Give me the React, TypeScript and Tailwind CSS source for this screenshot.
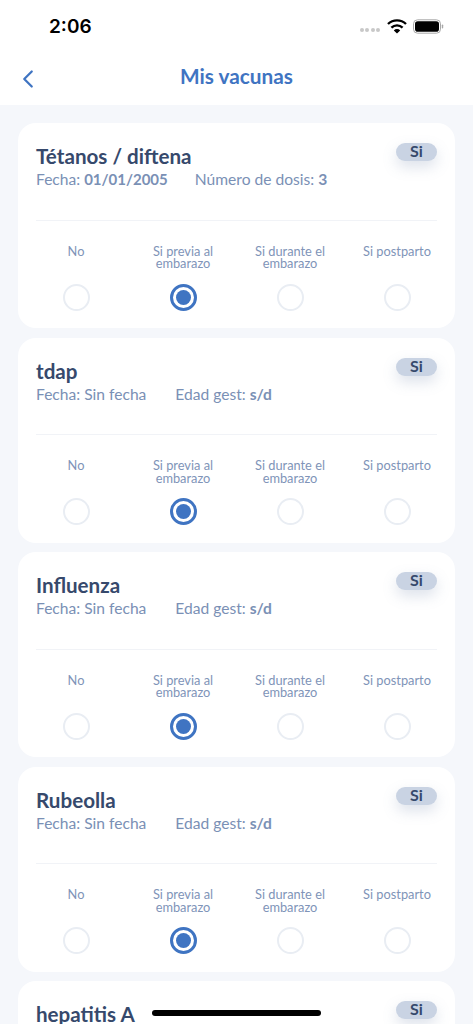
import { ChevronLeft } from "lucide-react";

const vaccines = [
  { name: "Tétanos / diftena", dateValue: "01/01/2005", extraLabel: "Número de dosis:", extraValue: "3" },
  { name: "tdap", extraLabel: "Edad gest:", extraValue: "s/d" },
  { name: "Influenza", extraLabel: "Edad gest:", extraValue: "s/d" },
  { name: "Rubeolla", extraLabel: "Edad gest:", extraValue: "s/d" },
  { name: "hepatitis A", extraLabel: "Edad gest:", extraValue: "s/d" },
];

const options = [
  ["No"],
  ["Si previa al", "embarazo"],
  ["Si durante el", "embarazo"],
  ["Si postparto"],
];

function StatusBar() {
  return (
    <div className="flex h-[52px] items-start justify-between pl-[49px] pr-[29px] pt-[15px]">
      <span className="font-['Inter',sans-serif] text-[19px] font-semibold leading-6 text-black">2:06</span>
      <div className="flex items-center pt-[4px]">
        <div className="mr-[7px] mt-[7px] flex gap-[1.5px]">
          <span className="h-[4px] w-[4px] rounded-full bg-[#c8c8c8]" />
          <span className="h-[4px] w-[4px] rounded-full bg-[#c8c8c8]" />
          <span className="h-[4px] w-[4px] rounded-full bg-[#c8c8c8]" />
          <span className="h-[4px] w-[4px] rounded-full bg-[#c8c8c8]" />
        </div>
        <svg width="20" height="15" viewBox="0 0 20 15" className="mr-[6px]">
          <path d="M1 5a13 13 0 0 1 18 0" fill="none" stroke="#000" strokeWidth="2.4" />
          <path d="M4.4 8.6a8.2 8.2 0 0 1 11.2 0" fill="none" stroke="#000" strokeWidth="2.4" />
          <path d="M6.8 11.4 10 14.6l3.2-3.2a4.6 4.6 0 0 0-6.4 0z" fill="#000" />
        </svg>
        <svg width="31" height="15" viewBox="0 0 31 15">
          <rect x="0.5" y="0.8" width="27" height="13.4" rx="4" fill="none" stroke="#a8a8a8" />
          <rect x="2" y="2.3" width="24" height="10.4" rx="2.8" fill="#000" />
          <rect x="28.8" y="5.5" width="1.4" height="4" rx="0.7" fill="#a8a8a8" />
        </svg>
      </div>
    </div>
  );
}

function VaccineCard({ name, dateValue, extraLabel, extraValue }: (typeof vaccines)[number]) {
  return (
    <div className="h-[205px] shrink-0 rounded-[18px] bg-white">
      <div className="mx-[18px] flex h-[97.6px] justify-between border-b border-[#f1f3f7] pt-[20px]">
        <div>
          <div className="text-[20.6px] font-bold leading-[26px] text-[#36496c]">{name}</div>
          <div className={`flex text-[15.6px] leading-[20px] text-[#7a90b5] ${dateValue ? "gap-[27px]" : "gap-[29px]"}`}>
            <span>
              Fecha: {dateValue ? <b className="text-[15px] font-bold">{dateValue}</b> : "Sin fecha"}
            </span>
            <span>
              {extraLabel} <b className="font-bold">{extraValue}</b>
            </span>
          </div>
        </div>
        <div className="flex h-[18px] w-[41px] justify-center rounded-full bg-[#c9d3e3] text-[16px] font-bold leading-[15px] text-[#36496c] shadow-[0_6px_14px_rgba(120,140,175,0.25)]">
          Si
        </div>
      </div>
      <div className="grid grid-cols-4 px-[4.5px] pt-[24px]">
        {options.map((lines, i) => (
          <div key={lines[0]} className="flex flex-col items-center">
            <div className="h-[34px] text-center text-[12.8px] leading-[12.5px] text-[#8094b8]">
              {lines.map((line) => (
                <div key={line}>{line}</div>
              ))}
            </div>
            {i === 1 ? (
              <div className="mt-[5px] flex h-[27px] w-[27px] items-center justify-center rounded-full border-[3px] border-[#3f74c2]">
                <div className="h-[15px] w-[15px] rounded-full bg-[#3f74c2]" />
              </div>
            ) : (
              <div className="mt-[5px] h-[27px] w-[27px] rounded-full border-2 border-[#e9edf3]" />
            )}
          </div>
        ))}
      </div>
    </div>
  );
}

export default function App() {
  return (
    <div className="relative flex h-[1024px] w-[473px] flex-col overflow-hidden bg-[#f5f7fb] font-['Lato','Noto_Sans',sans-serif]">
      <div className="h-[105px] shrink-0 bg-white">
        <StatusBar />
        <div className="relative flex h-[47px] items-center justify-center">
          <ChevronLeft size={30} strokeWidth={1.8} className="absolute left-[13px] top-[12px] text-[#3f74c2]" />
          <span className="text-[20.8px] font-bold text-[#3f74c2]">Mis vacunas</span>
        </div>
      </div>
      <div className="flex flex-col gap-[9.5px] px-[18px] pt-[18px]">
        {vaccines.map((v) => (
          <VaccineCard key={v.name} {...v} />
        ))}
      </div>
      <div className="absolute bottom-[8px] left-[152px] h-[6px] w-[169px] rounded-full bg-black" />
    </div>
  );
}
